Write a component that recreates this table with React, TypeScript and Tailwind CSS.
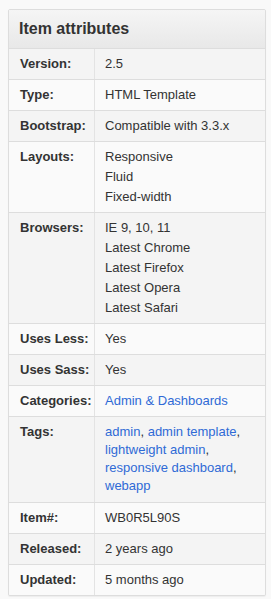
type Attr = {
  label: string;
  values?: string[];
  links?: string[];
  tags?: string[];
};

const attributes: Attr[] = [
  { label: 'Version:', values: ['2.5'] },
  { label: 'Type:', values: ['HTML Template'] },
  { label: 'Bootstrap:', values: ['Compatible with 3.3.x'] },
  { label: 'Layouts:', values: ['Responsive', 'Fluid', 'Fixed-width'] },
  {
    label: 'Browsers:',
    values: ['IE 9, 10, 11', 'Latest Chrome', 'Latest Firefox', 'Latest Opera', 'Latest Safari'],
  },
  { label: 'Uses Less:', values: ['Yes'] },
  { label: 'Uses Sass:', values: ['Yes'] },
  { label: 'Categories:', links: ['Admin & Dashboards'] },
  {
    label: 'Tags:',
    tags: ['admin', 'admin template', 'lightweight admin', 'responsive dashboard', 'webapp'],
  },
  { label: 'Item#:', values: ['WB0R5L90S'] },
  { label: 'Released:', values: ['2 years ago'] },
  { label: 'Updated:', values: ['5 months ago'] },
];

function AttrValue({ attr }: { attr: Attr }) {
  if (attr.tags) {
    // tags wrap tighter than the other rows
    return (
      <div className="pt-px pb-[2px] leading-[18px]">
        {attr.tags.map((tag, i) => (
          <span key={tag}>
            <a href="#" className="text-[#2f6ad6]">
              {tag}
            </a>
            {i < attr.tags!.length - 1 && ', '}
          </span>
        ))}
      </div>
    );
  }
  if (attr.links) {
    return (
      <div>
        {attr.links.map((l) => (
          <a key={l} href="#" className="block text-[#2f6ad6]">
            {l}
          </a>
        ))}
      </div>
    );
  }
  return (
    <div>
      {attr.values!.map((v) => (
        <div key={v}>{v}</div>
      ))}
    </div>
  );
}

export default function App() {
  return (
    <div className="min-h-screen bg-[#f9f9f9] pt-[9px] pl-[8px] font-['Liberation_Sans',Arial,sans-serif] text-[#333]">
      <div className="w-[258px] border border-[#dddddd] rounded-[2px] bg-[#f9f9f9] overflow-hidden shadow-[0_1px_1px_rgba(0,0,0,0.05)]">
        <div className="bg-gradient-to-b from-[#f5f5f5] to-[#e8e8e8] px-[10px] py-[10px]">
          <h3 className="text-[16px] leading-[17.6px] font-bold text-[#333]">Item attributes</h3>
        </div>
        <div className="text-[13px] leading-[20px]">
          {attributes.map((attr, i) => (
            <div
              key={attr.label}
              className={`flex border-t border-[#dddddd] ${i % 2 === 0 ? 'bg-[#f4f4f4]' : 'bg-[#fafafa]'}`}
            >
              <div className="w-[85px] shrink-0 whitespace-nowrap py-[5px] pl-[11px] font-bold">
                {attr.label}
              </div>
              <div className="flex-1 border-l border-[#e3e3e3] py-[5px] pl-[10px] pr-[10px]">
                <AttrValue attr={attr} />
              </div>
            </div>
          ))}
        </div>
      </div>
    </div>
  );
}
